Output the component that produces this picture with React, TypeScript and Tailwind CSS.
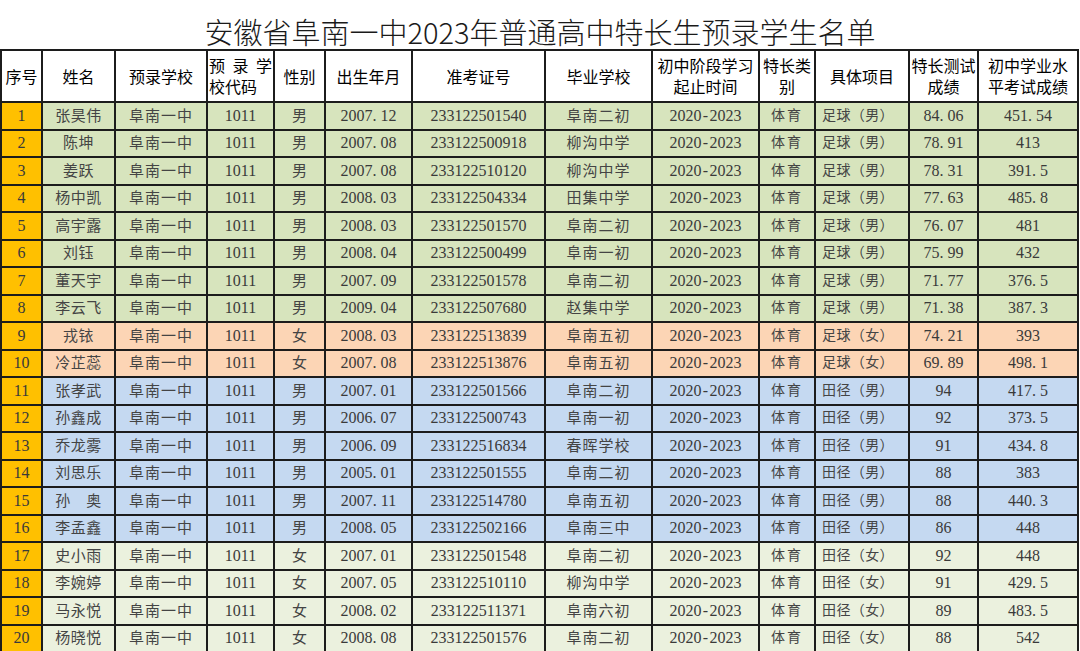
import React from 'react';

type Row = {
  name: string; birth: string; id: string; school: string;
  item: string; score: string; exam: string; sex: string; tone: 'g' | 'o' | 'b' | 'l';
};

const ROWS: Row[] = [
  { name: '张昊伟', sex: '男', birth: '2007.12', id: '233122501540', school: '阜南二初', item: '足球（男）', score: '84.06', exam: '451.54', tone: 'g' },
  { name: '陈坤', sex: '男', birth: '2007.08', id: '233122500918', school: '柳沟中学', item: '足球（男）', score: '78.91', exam: '413', tone: 'g' },
  { name: '姜跃', sex: '男', birth: '2007.08', id: '233122510120', school: '柳沟中学', item: '足球（男）', score: '78.31', exam: '391.5', tone: 'g' },
  { name: '杨中凯', sex: '男', birth: '2008.03', id: '233122504334', school: '田集中学', item: '足球（男）', score: '77.63', exam: '485.8', tone: 'g' },
  { name: '高宇露', sex: '男', birth: '2008.03', id: '233122501570', school: '阜南二初', item: '足球（男）', score: '76.07', exam: '481', tone: 'g' },
  { name: '刘钰', sex: '男', birth: '2008.04', id: '233122500499', school: '阜南一初', item: '足球（男）', score: '75.99', exam: '432', tone: 'g' },
  { name: '董天宇', sex: '男', birth: '2007.09', id: '233122501578', school: '阜南二初', item: '足球（男）', score: '71.77', exam: '376.5', tone: 'g' },
  { name: '李云飞', sex: '男', birth: '2009.04', id: '233122507680', school: '赵集中学', item: '足球（男）', score: '71.38', exam: '387.3', tone: 'g' },
  { name: '戎铱', sex: '女', birth: '2008.03', id: '233122513839', school: '阜南五初', item: '足球（女）', score: '74.21', exam: '393', tone: 'o' },
  { name: '冷芷蕊', sex: '女', birth: '2007.08', id: '233122513876', school: '阜南五初', item: '足球（女）', score: '69.89', exam: '498.1', tone: 'o' },
  { name: '张孝武', sex: '男', birth: '2007.01', id: '233122501566', school: '阜南二初', item: '田径（男）', score: '94', exam: '417.5', tone: 'b' },
  { name: '孙鑫成', sex: '男', birth: '2006.07', id: '233122500743', school: '阜南一初', item: '田径（男）', score: '92', exam: '373.5', tone: 'b' },
  { name: '乔龙雾', sex: '男', birth: '2006.09', id: '233122516834', school: '春晖学校', item: '田径（男）', score: '91', exam: '434.8', tone: 'b' },
  { name: '刘思乐', sex: '男', birth: '2005.01', id: '233122501555', school: '阜南二初', item: '田径（男）', score: '88', exam: '383', tone: 'b' },
  { name: '孙　奥', sex: '男', birth: '2007.11', id: '233122514780', school: '阜南五初', item: '田径（男）', score: '88', exam: '440.3', tone: 'b' },
  { name: '李孟鑫', sex: '男', birth: '2008.05', id: '233122502166', school: '阜南三中', item: '田径（男）', score: '86', exam: '448', tone: 'b' },
  { name: '史小雨', sex: '女', birth: '2007.01', id: '233122501548', school: '阜南二初', item: '田径（女）', score: '92', exam: '448', tone: 'l' },
  { name: '李婉婷', sex: '女', birth: '2007.05', id: '233122510110', school: '柳沟中学', item: '田径（女）', score: '91', exam: '429.5', tone: 'l' },
  { name: '马永悦', sex: '女', birth: '2008.02', id: '233122511371', school: '阜南六初', item: '田径（女）', score: '89', exam: '483.5', tone: 'l' },
  { name: '杨晓悦', sex: '女', birth: '2008.08', id: '233122501576', school: '阜南二初', item: '田径（女）', score: '88', exam: '542', tone: 'l' },
];

const TONE: Record<Row['tone'], string> = {
  g: 'bg-[#d7e4bd]',
  o: 'bg-[#fcd5b5]',
  b: 'bg-[#c5d9f1]',
  l: 'bg-[#ebf1de]',
};

// SimSun style: dots and dashes take a full half-width cell
function Num({ v }: { v: string }) {
  return (
    <span>
      {v.split('').map((c, i) =>
        c === '.' || c === '-'
          ? <span key={i} className={`inline-block w-[8px] ${c === '.' ? 'text-left' : 'text-center'}`}>{c}</span>
          : <React.Fragment key={i}>{c}</React.Fragment>
      )}
    </span>
  );
}

const cell = 'flex items-center justify-center';
const head = `${cell} bg-white text-center`;

export default function App() {
  return (
    <div className="w-[1080px] h-[651px] overflow-hidden bg-white">
      {/* Title */}
      <div className="h-[49px] pt-[17px] text-center text-[29px] leading-[29px] font-light text-[#1a1a1a] font-['Noto_Sans_CJK_SC',sans-serif]">
        安徽省阜南一中2023年普通高中特长生预录学生名单
      </div>

      {/* Table */}
      <div className="w-[1079px] grid grid-cols-[39px_71px_90px_65px_49px_85px_131px_105px_105px_54px_92px_67px_98px] grid-rows-[50px] auto-rows-[25.5px] gap-[2px] p-[2px] bg-[#1c1c1c]">
        <div className="contents text-[16px] leading-[21px] text-black font-['Noto_Sans_CJK_SC',sans-serif]">
          <div className={head}>序号</div>
          <div className={head}>姓名</div>
          <div className={head}>预录学校</div>
          <div className="bg-white flex flex-col justify-center px-[1px]">
            <div className="flex justify-between"><span>预</span><span>录</span><span>学</span></div>
            <div>校代码</div>
          </div>
          <div className={head}>性别</div>
          <div className={head}>出生年月</div>
          <div className={head}>准考证号</div>
          <div className={head}>毕业学校</div>
          <div className={head}>初中阶段学习<br />起止时间</div>
          <div className={head}>特长类<br />别</div>
          <div className={head}>具体项目</div>
          <div className={head}>特长测试<br />成绩</div>
          <div className={head}>初中学业水<br />平考试成绩</div>
        </div>

        {ROWS.map((r, i) => {
          const bg = TONE[r.tone];
          const c = `${cell} ${bg}`;
          return (
            <div key={i} className="contents text-[16px] leading-[20px] text-[#3a3a3a] font-['Liberation_Serif','Noto_Sans_CJK_SC',serif]">
              <div className={`${cell} bg-[#ffc000]`}>{i + 1}</div>
              <div className={`${c} text-[15px] tracking-[0.5px] text-[#444]`}>{r.name}</div>
              <div className={`${c} text-[15px] tracking-[1px] text-[#444]`}>阜南一中</div>
              <div className={c}>1011</div>
              <div className={`${c} text-[15px] text-[#444]`}>{r.sex}</div>
              <div className={c}><Num v={r.birth} /></div>
              <div className={c}>{r.id}</div>
              <div className={`${c} text-[15px] tracking-[1px] text-[#444]`}>{r.school}</div>
              <div className={c}><Num v="2020-2023" /></div>
              <div className={`${c} text-[14px] tracking-[2px] text-[#444]`}>体育</div>
              <div className={`flex items-center pl-[6px] ${bg} text-[14px] tracking-[0.4px] text-[#444]`}>{r.item}</div>
              <div className={c}><Num v={r.score} /></div>
              <div className={c}><Num v={r.exam} /></div>
            </div>
          );
        })}
      </div>
    </div>
  );
}
